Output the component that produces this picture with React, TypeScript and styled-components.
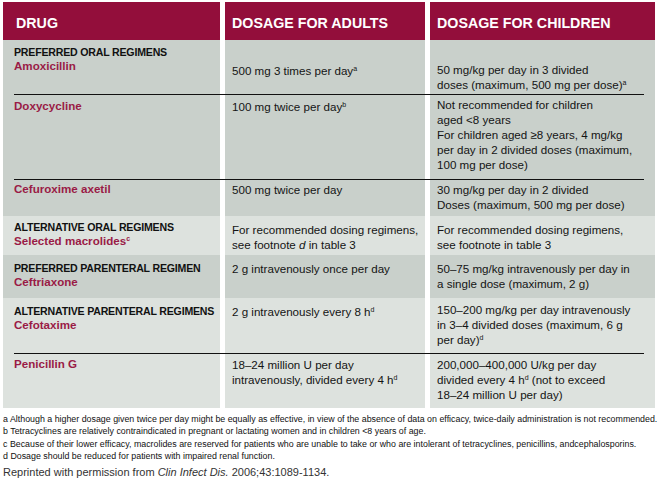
import React from 'react';
import styled, { createGlobalStyle, css } from 'styled-components';

const GlobalStyle = createGlobalStyle`
  html, body {
    margin: 0;
    padding: 0;
    background: #ffffff;
  }
  body {
    font-family: 'Liberation Sans', Arial, Helvetica, sans-serif;
    color: #141414;
  }
`;

type Tone = 'head' | 'dark' | 'light';

const tones: Record<Tone, string> = {
  head: '#930e3b',
  dark: '#c9d0cb',
  light: '#dde2de',
};

const Page = styled.div`
  width: 652px;
  padding: 2px 0 0 3px;
`;

const Table = styled.div`
  display: flex;
  flex-direction: column;
`;

const Row = styled.div<{ $tone: Tone; $h: number; $ruled?: boolean }>`
  position: relative;
  display: grid;
  grid-template-columns: 217px 200px 225px;
  column-gap: 5px;
  height: ${({ $h }) => $h}px;

  & > * {
    background: ${({ $tone }) => tones[$tone]};
    padding-left: 7px;
  }
  & > *:first-child {
    padding-left: 11px;
  }

  ${({ $ruled }) =>
    $ruled &&
    css`
      &::before {
        content: '';
        position: absolute;
        left: 11px;
        right: 11px;
        top: 0;
        height: 1px;
        background: #111;
      }
    `}
`;

const HeadCell = styled.div`
  padding-top: 12px;
  color: #ffffff;
  font-size: 15.5px;
  font-weight: 700;
  line-height: 18px;
  white-space: nowrap;

  &:first-child {
    padding-left: 13px;
  }

  span {
    display: inline-block;
    transform: scaleX(0.92);
    transform-origin: left center;
  }
`;

const Cell = styled.div<{ $pt: number }>`
  padding-top: ${({ $pt }) => $pt}px;
  font-size: 11.6px;
  line-height: 15px;
  white-space: nowrap;

  i {
    font-style: italic;
  }
`;

const Regimen = styled.div`
  font-size: 10.6px;
  font-weight: 700;
  letter-spacing: -0.2px;
  line-height: 14px;
  color: #111;
`;

const Drug = styled.div`
  font-size: 11.6px;
  font-weight: 700;
  line-height: 14px;
  color: #9a1b46;
`;

const Sup = styled.sup`
  font-size: 7px;
  line-height: 0;
  vertical-align: 4px;
`;

const Notes = styled.div`
  margin-top: 5px;
  font-size: 8.85px;
  line-height: 12.3px;
  color: #111;
  white-space: nowrap;
`;

const Credit = styled.div`
  margin-top: 3px;
  font-size: 11px;
  line-height: 14px;
  color: #333;
  white-space: nowrap;

  i {
    font-style: italic;
  }
`;

export default function App() {
  return (
    <>
      <GlobalStyle />
      <Page>
        <Table>
          <Row $tone="head" $h={38}>
            <HeadCell><span>DRUG</span></HeadCell>
            <HeadCell><span>DOSAGE FOR ADULTS</span></HeadCell>
            <HeadCell><span>DOSAGE FOR CHILDREN</span></HeadCell>
          </Row>

          <Row $tone="dark" $h={54}>
            <Cell $pt={5}>
              <Regimen>PREFERRED ORAL REGIMENS</Regimen>
              <Drug>Amoxicillin</Drug>
            </Cell>
            <Cell $pt={23}>
              500 mg 3 times per day<Sup>a</Sup>
            </Cell>
            <Cell $pt={22}>
              50 mg/kg per day in 3 divided
              <br />
              doses (maximum, 500 mg per dose)<Sup>a</Sup>
            </Cell>
          </Row>

          <Row $tone="dark" $h={85} $ruled>
            <Cell $pt={5}>
              <Drug>Doxycycline</Drug>
            </Cell>
            <Cell $pt={5}>
              100 mg twice per day<Sup>b</Sup>
            </Cell>
            <Cell $pt={3}>
              Not recommended for children
              <br />
              aged &lt;8 years
              <br />
              For children aged ≥8 years, 4 mg/kg
              <br />
              per day in 2 divided doses (maximum,
              <br />
              100 mg per dose)
            </Cell>
          </Row>

          <Row $tone="dark" $h={37} $ruled>
            <Cell $pt={3}>
              <Drug>Cefuroxime axetil</Drug>
            </Cell>
            <Cell $pt={3}>500 mg twice per day</Cell>
            <Cell $pt={3}>
              30 mg/kg per day in 2 divided
              <br />
              Doses (maximum, 500 mg per dose)
            </Cell>
          </Row>

          <Row $tone="light" $h={39}>
            <Cell $pt={4}>
              <Regimen>ALTERNATIVE ORAL REGIMENS</Regimen>
              <Drug>
                Selected macrolides<Sup>c</Sup>
              </Drug>
            </Cell>
            <Cell $pt={6}>
              For recommended dosing regimens,
              <br />
              see footnote <i>d</i> in table 3
            </Cell>
            <Cell $pt={6}>
              For recommended dosing regimens,
              <br />
              see footnote in table 3
            </Cell>
          </Row>

          <Row $tone="dark" $h={43}>
            <Cell $pt={6}>
              <Regimen>PREFERRED PARENTERAL REGIMEN</Regimen>
              <Drug>Ceftriaxone</Drug>
            </Cell>
            <Cell $pt={6}>2 g intravenously once per day</Cell>
            <Cell $pt={6}>
              50–75 mg/kg intravenously per day in
              <br />
              a single dose (maximum, 2 g)
            </Cell>
          </Row>

          <Row $tone="light" $h={55}>
            <Cell $pt={6}>
              <Regimen>ALTERNATIVE PARENTERAL REGIMENS</Regimen>
              <Drug>Cefotaxime</Drug>
            </Cell>
            <Cell $pt={6}>
              2 g intravenously every 8 h<Sup>d</Sup>
            </Cell>
            <Cell $pt={4}>
              150–200 mg/kg per day intravenously
              <br />
              in 3–4 divided doses (maximum, 6 g
              <br />
              per day)<Sup>d</Sup>
            </Cell>
          </Row>

          <Row $tone="light" $h={55} $ruled>
            <Cell $pt={4}>
              <Drug>Penicillin G</Drug>
            </Cell>
            <Cell $pt={4}>
              18–24 million U per day
              <br />
              intravenously, divided every 4 h<Sup>d</Sup>
            </Cell>
            <Cell $pt={4}>
              200,000–400,000 U/kg per day
              <br />
              divided every 4 h<Sup>d</Sup> (not to exceed
              <br />
              18–24 million U per day)
            </Cell>
          </Row>
        </Table>

        <Notes>
          <div>
            a Although a higher dosage given twice per day might be equally as effective, in view of the absence of data on efficacy, twice-daily administration is not recommended.
          </div>
          <div>
            b Tetracyclines are relatively contraindicated in pregnant or lactating women and in children &lt;8 years of age.
          </div>
          <div>
            c Because of their lower efficacy, macrolides are reserved for patients who are unable to take or who are intolerant of tetracyclines, penicillins, andcephalosporins.
          </div>
          <div>d Dosage should be reduced for patients with impaired renal function.</div>
        </Notes>

        <Credit>
          Reprinted with permission from <i>Clin Infect Dis.</i> 2006;43:1089-1134.
        </Credit>
      </Page>
    </>
  );
}
